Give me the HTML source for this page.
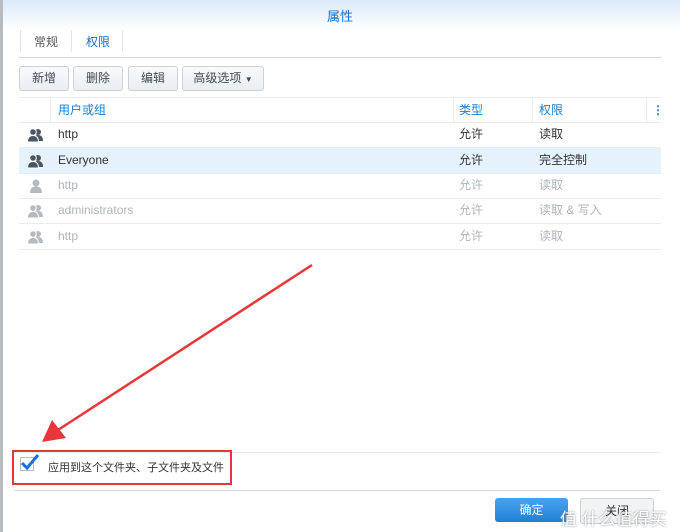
<!DOCTYPE html><html><head><meta charset="utf-8"><style>
body{margin:0;width:680px;height:532px;overflow:hidden;background:#fff;font-family:"Liberation Sans","Noto Sans CJK SC",sans-serif;font-size:12px;color:#333;position:relative}
.a{position:absolute}
.btn{position:absolute;top:66px;height:23px;border:1px solid #c9d1d9;border-radius:3px;background:linear-gradient(#f8fafb,#eaeef1);line-height:23px;text-align:center;color:#404a55}
.row{position:absolute;left:19px;width:642px;height:25px;border-bottom:1px solid #e8ecf0;line-height:25px}
.row span{position:absolute}
.row svg{position:absolute;left:9px;top:6px}
.g{color:#b0b5ba}
</style></head><body>
<svg width="0" height="0" style="position:absolute"><defs>
<g id="two"><circle cx="10" cy="4" r="3"/><path d="M5 13 Q5 7 10 7 Q15 7 15 13Z"/><circle cx="5" cy="4" r="3.3" stroke="#fff" stroke-width="1"/><path d="M-0.5 14 Q-0.5 7.5 5 7.5 Q10.5 7.5 10.5 14Z" stroke="#fff" stroke-width="1"/></g>
<g id="one"><circle cx="6" cy="4" r="3.5"/><path d="M0 14 Q0 7.5 6 7.5 Q12 7.5 12 14Z"/></g>
</defs></svg>
<div class="a" style="left:0;top:0;width:3px;height:532px;background:#b8bcc0"></div>
<div class="a" style="left:3px;top:0;width:677px;height:30px;background:linear-gradient(#dbe9f7,#fff)"></div>
<div class="a" style="left:0;width:680px;top:6px;text-align:center;color:#1a6fc4;font-size:13px">属性</div>
<div class="a" style="left:19px;top:57px;width:642px;height:1px;background:#d5d9dd"></div>
<div class="a" style="left:20px;top:30px;width:1px;height:22px;background:#e3e6e9"></div>
<div class="a" style="left:71px;top:30px;width:1px;height:22px;background:#e3e6e9"></div>
<div class="a" style="left:122px;top:30px;width:1px;height:22px;background:#e3e6e9"></div>
<div class="a" style="left:34px;top:33px;color:#555">常规</div>
<div class="a" style="left:86px;top:33px;color:#1a6fc4">权限</div>
<div class="btn" style="left:19px;width:48px">新增</div>
<div class="btn" style="left:73px;width:48px">删除</div>
<div class="btn" style="left:128px;width:48px">编辑</div>
<div class="btn" style="left:182px;width:80px">高级选项 <span style="font-size:8px">▼</span></div>
<div class="row" style="top:97px;border-top:1px solid #e8ecf0;height:24px;color:#1a7fd4;line-height:24px"><span style="left:39px">用户或组</span><span style="left:440px">类型</span><span style="left:520px">权限</span><span style="left:633px;font-weight:bold">⋮</span>
<div class="a" style="left:31px;top:0;width:1px;height:24px;background:#e8ecf0"></div><div class="a" style="left:434px;top:0;width:1px;height:24px;background:#e8ecf0"></div><div class="a" style="left:513px;top:0;width:1px;height:24px;background:#e8ecf0"></div><div class="a" style="left:627px;top:0;width:1px;height:24px;background:#e8ecf0"></div></div>
<div class="row" style="top:122px"><svg width="16" height="15" fill="#4a5560"><use href="#two"/></svg><span style="left:39px">http</span><span style="left:440px">允许</span><span style="left:520px">读取</span></div>
<div class="row" style="top:148px;background:#e4f2fc"><svg width="16" height="15" fill="#4a5560"><use href="#two"/></svg><span style="left:39px">Everyone</span><span style="left:440px">允许</span><span style="left:520px">完全控制</span></div>
<div class="row g" style="top:173px"><svg width="16" height="15" fill="#b5babf" style="left:11px"><use href="#one"/></svg><span style="left:39px">http</span><span style="left:440px">允许</span><span style="left:520px">读取</span></div>
<div class="row g" style="top:198px"><svg width="16" height="15" fill="#b5babf"><use href="#two"/></svg><span style="left:39px">administrators</span><span style="left:440px">允许</span><span style="left:520px">读取 &amp; 写入</span></div>
<div class="row g" style="top:224px"><svg width="16" height="15" fill="#b5babf"><use href="#two"/></svg><span style="left:39px">http</span><span style="left:440px">允许</span><span style="left:520px">读取</span></div>
<div class="a" style="left:14px;top:452px;width:646px;height:1px;background:#e8ecf0"></div>
<div class="a" style="left:12px;top:450px;width:216px;height:31px;border:2px solid #e8373a"></div>
<div class="a" style="left:20px;top:457px;width:12px;height:12px;border:1px solid #b5bcc3;background:#fff"></div>
<svg class="a" style="left:18px;top:452px" width="22" height="20"><path d="M4 11 L9 16 L20 3" stroke="#1a73d4" stroke-width="3" fill="none"/></svg>
<div class="a" style="left:48px;top:459px;font-size:11px">应用到这个文件夹、子文件夹及文件</div>
<div class="a" style="left:14px;top:490px;width:646px;height:1px;background:#d8dcdf"></div>
<div class="a" style="left:495px;top:498px;width:73px;height:24px;border-radius:3px;background:linear-gradient(#4ba3ec,#1f7fd8);color:#fff;text-align:center;line-height:24px">确定</div>
<div class="a" style="left:580px;top:498px;width:72px;height:24px;border:1px solid #c9d1d9;border-radius:3px;background:#f1f3f5;text-align:center;line-height:24px">关闭</div>
<div class="a" style="left:560px;top:505px;color:#fff;font-size:17px;text-shadow:0 0 2px #888">值 什么值得买</div>
<svg class="a" style="left:0;top:0" width="680" height="532"><line x1="312" y1="265" x2="58" y2="430" stroke="#e8373a" stroke-width="2.5"/><polygon points="42,442 52,420 66,438" fill="#e8373a"/></svg>
</body></html>
